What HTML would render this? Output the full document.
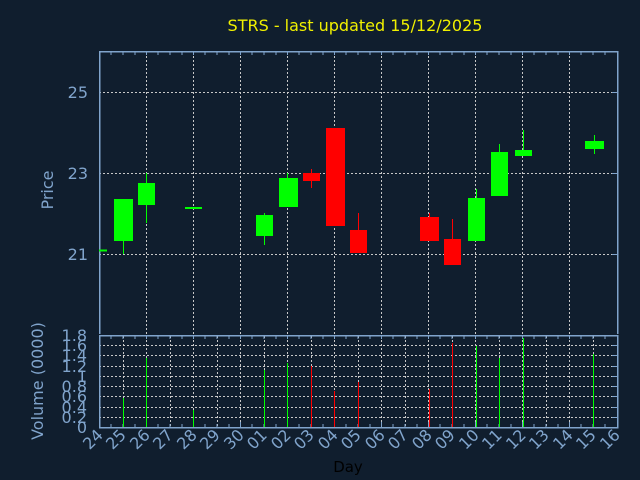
<!DOCTYPE html>
<html><head><meta charset="utf-8"><style>
html,body{margin:0;padding:0;background:#101e2e;}
svg{display:block;}
text{font-family:"DejaVu Sans","Liberation Sans",sans-serif;}
</style></head><body>
<svg width="640" height="480" viewBox="0 0 640 480" xmlns="http://www.w3.org/2000/svg">
<rect width="640" height="480" fill="#101e2e"/>
<text x="355" y="31" fill="#f0f000" font-size="16" text-anchor="middle">STRS - last updated 15/12/2025</text>

<g shape-rendering="crispEdges">
<!-- price grid -->
<g stroke="#c8c8c8" stroke-width="1" stroke-dasharray="2,2">
<line x1="99" y1="92.5" x2="617" y2="92.5"/>
<line x1="99" y1="173.5" x2="617" y2="173.5"/>
<line x1="99" y1="254.5" x2="617" y2="254.5"/>
<line x1="146.5" y1="52" x2="146.5" y2="334"/>
<line x1="193.5" y1="52" x2="193.5" y2="334"/>
<line x1="240.5" y1="52" x2="240.5" y2="334"/>
<line x1="287.5" y1="52" x2="287.5" y2="334"/>
<line x1="334.5" y1="52" x2="334.5" y2="334"/>
<line x1="381.5" y1="52" x2="381.5" y2="334"/>
<line x1="428.5" y1="52" x2="428.5" y2="334"/>
<line x1="475.5" y1="52" x2="475.5" y2="334"/>
<line x1="522.5" y1="52" x2="522.5" y2="334"/>
<line x1="569.5" y1="52" x2="569.5" y2="334"/>
</g>
<!-- volume grid -->
<g stroke="#c8c8c8" stroke-width="1" stroke-dasharray="2,2">
<line x1="99" y1="345.5" x2="617" y2="345.5"/>
<line x1="99" y1="355.5" x2="617" y2="355.5"/>
<line x1="99" y1="366.5" x2="617" y2="366.5"/>
<line x1="99" y1="376.5" x2="617" y2="376.5"/>
<line x1="99" y1="386.5" x2="617" y2="386.5"/>
<line x1="99" y1="396.5" x2="617" y2="396.5"/>
<line x1="99" y1="407.5" x2="617" y2="407.5"/>
<line x1="99" y1="417.5" x2="617" y2="417.5"/>
<line x1="123.5" y1="336" x2="123.5" y2="427"/>
<line x1="146.5" y1="336" x2="146.5" y2="427"/>
<line x1="170.5" y1="336" x2="170.5" y2="427"/>
<line x1="193.5" y1="336" x2="193.5" y2="427"/>
<line x1="217.5" y1="336" x2="217.5" y2="427"/>
<line x1="240.5" y1="336" x2="240.5" y2="427"/>
<line x1="264.5" y1="336" x2="264.5" y2="427"/>
<line x1="287.5" y1="336" x2="287.5" y2="427"/>
<line x1="311.5" y1="336" x2="311.5" y2="427"/>
<line x1="334.5" y1="336" x2="334.5" y2="427"/>
<line x1="358.5" y1="336" x2="358.5" y2="427"/>
<line x1="381.5" y1="336" x2="381.5" y2="427"/>
<line x1="405.5" y1="336" x2="405.5" y2="427"/>
<line x1="428.5" y1="336" x2="428.5" y2="427"/>
<line x1="452.5" y1="336" x2="452.5" y2="427"/>
<line x1="475.5" y1="336" x2="475.5" y2="427"/>
<line x1="499.5" y1="336" x2="499.5" y2="427"/>
<line x1="522.5" y1="336" x2="522.5" y2="427"/>
<line x1="546.5" y1="336" x2="546.5" y2="427"/>
<line x1="569.5" y1="336" x2="569.5" y2="427"/>
<line x1="593.5" y1="336" x2="593.5" y2="427"/>
</g>

<!-- axes -->
<g stroke="#80a4cc" stroke-width="1.5" fill="none">
<polyline points="99.5,334 99.5,51.5 617.5,51.5 617.5,334"/>
<rect x="99.5" y="335.5" width="518" height="92"/>
</g>
<g stroke="#80a4cc" stroke-width="1">
<path d="M111 52v3M123 52v3M135 52v3M146.5 52v3M158 52v3M170 52v3M182 52v3M193.5 52v3M205 52v3M217 52v3M229 52v3M240.5 52v3M252 52v3M264 52v3M276 52v3M287.5 52v3M299 52v3M311 52v3M323 52v3M334.5 52v3M346 52v3M358 52v3M370 52v3M381.5 52v3M393 52v3M405 52v3M417 52v3M428.5 52v3M440 52v3M452 52v3M464 52v3M475.5 52v3M487 52v3M499 52v3M511 52v3M522.5 52v3M534 52v3M546 52v3M558 52v3M569.5 52v3M581 52v3M593 52v3M605 52v3"/>
<path d="M111 336v3M123 336v3M135 336v3M146.5 336v3M158 336v3M170 336v3M182 336v3M193.5 336v3M205 336v3M217 336v3M229 336v3M240.5 336v3M252 336v3M264 336v3M276 336v3M287.5 336v3M299 336v3M311 336v3M323 336v3M334.5 336v3M346 336v3M358 336v3M370 336v3M381.5 336v3M393 336v3M405 336v3M417 336v3M428.5 336v3M440 336v3M452 336v3M464 336v3M475.5 336v3M487 336v3M499 336v3M511 336v3M522.5 336v3M534 336v3M546 336v3M558 336v3M569.5 336v3M581 336v3M593 336v3M605 336v3"/>
<path d="M111 427v-3M123 427v-3M135 427v-3M146.5 427v-5M158 427v-3M170 427v-3M182 427v-3M193.5 427v-5M205 427v-3M217 427v-3M229 427v-3M240.5 427v-5M252 427v-3M264 427v-3M276 427v-3M287.5 427v-5M299 427v-3M311 427v-3M323 427v-3M334.5 427v-5M346 427v-3M358 427v-3M370 427v-3M381.5 427v-5M393 427v-3M405 427v-3M417 427v-3M428.5 427v-5M440 427v-3M452 427v-3M464 427v-3M475.5 427v-5M487 427v-3M499 427v-3M511 427v-3M522.5 427v-5M534 427v-3M546 427v-3M558 427v-3M569.5 427v-5M581 427v-3M593 427v-3M605 427v-3"/>
<path d="M617 92.5h-5M617 173.5h-5M617 254.5h-5M617 345.5h-5M617 355.5h-5M617 366.5h-5M617 376.5h-5M617 386.5h-5M617 396.5h-5M617 407.5h-5M617 417.5h-5"/>
</g>

<!-- candles -->
<g fill="#00ff00">
<rect x="99" y="249.5" width="8" height="2"/>
<rect x="123" y="241" width="1" height="13"/><rect x="114" y="199" width="19" height="42"/>
<rect x="146" y="173" width="1" height="50"/><rect x="138" y="183" width="17" height="22"/>
<rect x="185" y="207" width="17" height="2"/>
<rect x="264" y="213" width="1" height="32"/><rect x="256" y="215" width="17" height="21"/>
<rect x="287" y="173" width="1" height="5"/><rect x="279" y="178" width="19" height="29"/>
<rect x="476" y="189" width="1" height="9"/><rect x="468" y="198" width="17" height="43"/>
<rect x="499" y="144" width="1" height="8"/><rect x="491" y="152" width="17" height="44"/>
<rect x="523" y="130" width="1" height="20"/><rect x="515" y="150" width="17" height="6"/>
<rect x="594" y="135" width="1" height="19"/><rect x="585" y="141" width="19" height="8"/>
</g>
<g fill="#ff0000">
<rect x="311" y="169" width="1" height="19"/><rect x="303" y="173" width="17" height="8"/>
<rect x="326" y="128" width="19" height="98"/>
<rect x="358" y="213" width="1" height="17"/><rect x="350" y="230" width="17" height="23"/>
<rect x="429" y="213" width="1" height="4"/><rect x="420" y="217" width="19" height="24"/>
<rect x="452" y="219" width="1" height="20"/><rect x="444" y="239" width="17" height="26"/>
</g>

<!-- volume bars -->
<g>
<rect x="123" y="398" width="1" height="29" fill="#00ff00"/>
<rect x="146" y="358" width="1" height="69" fill="#00ff00"/>
<rect x="193" y="410" width="1" height="17" fill="#00ff00"/>
<rect x="264" y="370" width="1" height="57" fill="#00ff00"/>
<rect x="287" y="363" width="1" height="64" fill="#00ff00"/>
<rect x="311" y="366" width="1" height="61" fill="#ff0000"/>
<rect x="334" y="391" width="1" height="36" fill="#ff0000"/>
<rect x="358" y="382" width="1" height="45" fill="#ff0000"/>
<rect x="429" y="389" width="1" height="38" fill="#ff0000"/>
<rect x="452" y="343" width="1" height="84" fill="#ff0000"/>
<rect x="476" y="346" width="1" height="81" fill="#00ff00"/>
<rect x="499" y="358" width="1" height="69" fill="#00ff00"/>
<rect x="523" y="338" width="1" height="89" fill="#00ff00"/>
<rect x="593" y="354" width="1" height="73" fill="#00ff00"/>
</g>
</g>

<!-- labels -->
<g fill="#80a4cc" font-size="16">
<text x="88" y="98" text-anchor="end">25</text>
<text x="88" y="179" text-anchor="end">23</text>
<text x="88" y="260" text-anchor="end">21</text>
<text transform="translate(53,190) rotate(-90)" text-anchor="middle">Price</text>
<text transform="translate(43,381) rotate(-90)" text-anchor="middle">Volume (0000)</text>
</g>
<g fill="#80a4cc" font-size="16" text-anchor="end">
<text x="87" y="341">1.8</text>
<text x="87" y="351">1.6</text>
<text x="87" y="361">1.4</text>
<text x="87" y="372">1.2</text>
<text x="87" y="382">1</text>
<text x="87" y="392">0.8</text>
<text x="87" y="402">0.6</text>
<text x="87" y="413">0.4</text>
<text x="87" y="423">0.2</text>
<text x="87" y="433">0</text>
</g>
<g fill="#80a4cc" font-size="16" text-anchor="end">
<text transform="translate(104,436) rotate(-45)">24</text>
<text transform="translate(127,436) rotate(-45)">25</text>
<text transform="translate(151,436) rotate(-45)">26</text>
<text transform="translate(174,436) rotate(-45)">27</text>
<text transform="translate(198,436) rotate(-45)">28</text>
<text transform="translate(221,436) rotate(-45)">29</text>
<text transform="translate(245,436) rotate(-45)">30</text>
<text transform="translate(268,436) rotate(-45)">01</text>
<text transform="translate(292,436) rotate(-45)">02</text>
<text transform="translate(315,436) rotate(-45)">03</text>
<text transform="translate(339,436) rotate(-45)">04</text>
<text transform="translate(362,436) rotate(-45)">05</text>
<text transform="translate(386,436) rotate(-45)">06</text>
<text transform="translate(409,436) rotate(-45)">07</text>
<text transform="translate(433,436) rotate(-45)">08</text>
<text transform="translate(456,436) rotate(-45)">09</text>
<text transform="translate(480,436) rotate(-45)">10</text>
<text transform="translate(503,436) rotate(-45)">11</text>
<text transform="translate(527,436) rotate(-45)">12</text>
<text transform="translate(550,436) rotate(-45)">13</text>
<text transform="translate(574,436) rotate(-45)">14</text>
<text transform="translate(597,436) rotate(-45)">15</text>
<text transform="translate(621,436) rotate(-45)">16</text>
</g>
<text x="348" y="472" fill="#000000" font-size="15" text-anchor="middle">Day</text>
</svg>
</body></html>
